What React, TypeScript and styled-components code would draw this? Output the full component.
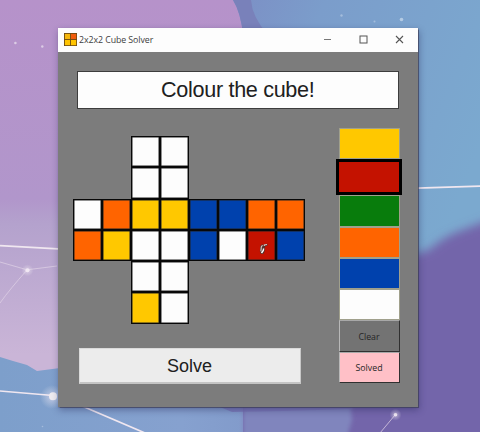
import React, { useState } from "react";
import styled, { createGlobalStyle } from "styled-components";

const GlobalStyle = createGlobalStyle`
  * { box-sizing: border-box; }
  body { margin: 0; overflow: hidden; }
`;

const COLORS = {
  yellow: "#ffc800",
  red: "#c41200",
  green: "#087c0c",
  orange: "#ff6400",
  blue: "#0041ad",
  white: "#fdfdfd",
};
type ColorName = keyof typeof COLORS;

const Desktop = styled.main`
  position: relative;
  isolation: isolate;
  width: 480px;
  height: 432px;
  padding: 28px 0 0 57.5px;
  overflow: hidden;
  background: #b397cc;
`;

const WallpaperArt = styled.svg`
  position: absolute;
  inset: 0;
  z-index: -1;
`;

const AppWindow = styled.section`
  display: flex;
  flex-direction: column;
  width: 360px;
  height: 379px;
  background: #7c7c7c;
  box-shadow: 0 0 1px 0.5px rgba(60, 60, 85, 0.7), 1px 3px 7px rgba(30, 30, 80, 0.4);
`;

const TitleBar = styled.header`
  display: flex;
  align-items: center;
  flex: 0 0 23.5px;
  padding-left: 6px;
  background: #fdfdfd;
`;

const Title = styled.h1`
  flex: 1;
  margin: 0 0 0 2.5px;
  color: #404040;
  font: 400 8.8px/12px "Open Sans", "Noto Sans", sans-serif;
  letter-spacing: -0.07px;
  white-space: nowrap;
`;

const WindowButton = styled.button`
  display: grid;
  place-items: center;
  width: 36px;
  height: 23px;
  padding: 0;
  border: 0;
  background: none;
`;

const Body = styled.div`
  display: grid;
  grid-template-columns: 243px 61px;
  grid-template-rows: 38.5px 1fr;
  column-gap: 18.5px;
  row-gap: 19px;
  flex: 1;
  padding: 19px 0 23px 19.5px;
`;

const Message = styled.output`
  display: grid;
  place-items: center;
  grid-column: 1 / -1;
  width: 321.5px;
  border: 1px solid #3d3d3d;
  background: #fdfdfd;
  color: #202020;
  font: 400 21.6px/26px "Liberation Sans", Arial, sans-serif;
  letter-spacing: -0.32px;
`;

const Workspace = styled.div`
  display: flex;
  flex-direction: column;
  align-items: flex-start;
  justify-content: space-between;
  padding-top: 8px;
`;

const Net = styled.div`
  display: grid;
  grid-template-columns: repeat(8, 29.05px);
  grid-template-rows: repeat(6, 31.25px);
  margin-left: -4px;
`;

const Sticker = styled.button<{ $row: number; $col: number; $color: ColorName }>`
  display: grid;
  place-items: center;
  grid-row: ${(p) => p.$row};
  grid-column: ${(p) => p.$col};
  padding: 0;
  border: 1px solid #080808;
  box-shadow: inset 0 0 0 0.5px #222;
  background: ${(p) => COLORS[p.$color]};
`;

const SolveButton = styled.button`
  width: 222px;
  height: 36px;
  margin-left: 1.5px;
  padding: 0;
  border: 1px solid #dadada;
  border-bottom: 2px solid #c4c4c4;
  border-right-color: #c8c8c8;
  background: #ececec;
  color: #202020;
  font: 400 18px/22px "Liberation Sans", Arial, sans-serif;
`;

const Palette = styled.div`
  display: flex;
  flex-direction: column;
`;

const Swatch = styled.button<{ $color: ColorName; $selected: boolean }>`
  flex: 0 0 ${(p) => (p.$selected ? 36 : 31.3)}px;
  margin: 0 ${(p) => (p.$selected ? -2.5 : 0)}px;
  padding: 0;
  border: ${(p) => (p.$selected ? "3px solid #000" : "1px solid #a0a08c")};
  background: ${(p) => COLORS[p.$color]};
`;

const PaletteButton = styled.button<{ $fill: string }>`
  flex: 0 0 31.3px;
  padding: 2px 0 0;
  border: 1px solid;
  border-color: #a8a8a8 #303030 #303030 #b8b8b8;
  background: ${(p) => p.$fill};
  color: #262626;
  font: 400 8.8px/12px "Open Sans", "Noto Sans", sans-serif;
`;

const Pointer = styled.svg`
  display: block;
  margin: 7px 0 0 5px;
`;

const NET: [number, number, ColorName][] = [
  [1, 3, "white"], [1, 4, "white"],
  [2, 3, "white"], [2, 4, "white"],
  [3, 1, "white"], [3, 2, "orange"], [3, 3, "yellow"], [3, 4, "yellow"],
  [3, 5, "blue"], [3, 6, "blue"], [3, 7, "orange"], [3, 8, "orange"],
  [4, 1, "orange"], [4, 2, "yellow"], [4, 3, "white"], [4, 4, "white"],
  [4, 5, "blue"], [4, 6, "white"], [4, 7, "red"], [4, 8, "blue"],
  [5, 3, "white"], [5, 4, "white"],
  [6, 3, "yellow"], [6, 4, "white"],
];

const Wallpaper = () => (
  <WallpaperArt width="480" height="432" viewBox="0 0 480 432" aria-hidden="true">
    <defs>
      <linearGradient id="lilac" x1="0" y1="0" x2="0" y2="1">
        <stop offset="0" stopColor="#b692ca" />
        <stop offset="0.46" stopColor="#b196cb" />
        <stop offset="0.52" stopColor="#b4a2cd" />
        <stop offset="0.82" stopColor="#cab5d7" />
      </linearGradient>
      <linearGradient id="sky" x1="0" y1="0" x2="1" y2="0.5">
        <stop offset="0" stopColor="#7c8fc5" />
        <stop offset="0.3" stopColor="#7b9dcb" />
        <stop offset="1" stopColor="#7ba9cf" />
      </linearGradient>
      <linearGradient id="shore" x1="0" y1="0" x2="1" y2="0">
        <stop offset="0" stopColor="#7d9fcb" />
        <stop offset="0.75" stopColor="#86a1cf" />
        <stop offset="1" stopColor="#829bcb" />
      </linearGradient>
      <radialGradient id="glow">
        <stop offset="0" stopColor="#fff" stopOpacity="0.9" />
        <stop offset="0.3" stopColor="#f4eaf6" stopOpacity="0.4" />
        <stop offset="1" stopColor="#eee" stopOpacity="0" />
      </radialGradient>
      <filter id="soft" x="-20%" y="-20%" width="140%" height="140%">
        <feGaussianBlur stdDeviation="5" />
      </filter>
      <filter id="haze" x="-20%" y="-20%" width="140%" height="140%">
        <feGaussianBlur stdDeviation="2" />
      </filter>
    </defs>
    <rect width="480" height="432" fill="url(#lilac)" />
    <path d="M233 0Q241 13 243 35L300 100V300H480V0Z" fill="url(#sky)" />
    <path d="M233 0H251Q252 17 268 35H243Q241 13 233 0Z" fill="#7981ba" />
    <path d="M405 258L430 249Q444 236 465 229L500 216V450H230V380H405Z" fill="#7365aa" filter="url(#soft)" />
    <path d="M0 357L13 361L27 365L37 371L60 368V400H243V432H0Z" fill="url(#shore)" />
    <path d="M243 400H350L352 420L346 440H243Z" fill="#8085bd" filter="url(#haze)" />
    <path d="M220 407H352V409L282 411L232 412Z" fill="#7872b4" opacity="0.7" />
    <g fill="none" stroke="#f0e7f0" strokeWidth="1.7">
      <path d="M0 245.7L58 248.8" />
      <path d="M417 188.2L480 186.2" />
      <path d="M0 391L53 395.5" />
      <path d="M82 406L145 433" />
    </g>
    <g fill="none" stroke="#ded0e5" strokeWidth="1" opacity="0.75">
      <path d="M0 262L27 269.8L57 266" />
      <path d="M0 303Q10 289 27 270" />
      <path d="M380 433L395 415" />
    </g>
    <circle cx="27.5" cy="270.3" r="6" fill="url(#glow)" />
    <circle cx="27.5" cy="270.3" r="2" fill="#f1e8f3" />
    <circle cx="52" cy="397" r="12" fill="url(#glow)" />
    <circle cx="53" cy="396.3" r="4" fill="#eeebef" />
    <circle cx="395.5" cy="414.7" r="6" fill="url(#glow)" />
    <circle cx="395.5" cy="414.7" r="1.8" fill="#f1e8f3" />
    <g fill="#dccce5">
      <circle cx="15.4" cy="43" r="1.3" />
      <circle cx="42.3" cy="46.5" r="1.2" />
      <circle cx="341.5" cy="15.5" r="1.2" fill="#a4bddc" />
      <circle cx="374.5" cy="21.5" r="1" fill="#a4bddc" />
      <circle cx="401.5" cy="19.5" r="1.8" fill="#b4cbe4" />
      <circle cx="42.5" cy="426.5" r="0.8" fill="#a5bbdc" />
    </g>
  </WallpaperArt>
);

const CubeIcon = () => (
  <svg width="13" height="13" viewBox="0 0 13 13" aria-hidden="true">
    <rect width="13" height="13" fill="#6d4a13" />
    <rect x="0.9" y="0.9" width="5.2" height="5.2" fill="#f5b70d" />
    <rect x="7" y="0.9" width="5.2" height="5.2" fill="#f25c0c" />
    <rect x="0.9" y="7" width="5.2" height="5.2" fill="#ffc400" />
    <rect x="7" y="7" width="5.2" height="5.2" fill="#ffc400" />
  </svg>
);

export default function App() {
  const [selected, setSelected] = useState<ColorName>("red");

  return (
    <>
      <GlobalStyle />
      <Desktop>
        <Wallpaper />
        <AppWindow>
          <TitleBar>
            <CubeIcon />
            <Title>2x2x2 Cube Solver</Title>
            <WindowButton aria-label="Minimize">
              <svg width="9" height="9" viewBox="0 0 9 9"><path d="M1 4.5H8" stroke="#777" /></svg>
            </WindowButton>
            <WindowButton aria-label="Maximize">
              <svg width="9" height="9" viewBox="0 0 9 9"><rect x="1" y="1" width="7" height="7" fill="none" stroke="#555" /></svg>
            </WindowButton>
            <WindowButton aria-label="Close">
              <svg width="9" height="9" viewBox="0 0 9 9"><path d="M1 1L8 8M8 1L1 8" stroke="#555" strokeWidth="1.1" /></svg>
            </WindowButton>
          </TitleBar>
          <Body>
            <Message>Colour the cube!</Message>
            <Workspace>
              <Net>
                {NET.map(([row, col, color]) => (
                  <Sticker key={`${row}-${col}`} $row={row} $col={col} $color={color}>
                    {color === "red" && (
                      <Pointer width="10" height="12" viewBox="0 0 10 12" aria-hidden="true">
                        <path d="M1.5 2.5L3.5 1.2L4.6 2.5L5.5 1.3L8.5 0.8V2.6L6 3.5L5.6 8.5L4.2 11H2L0.8 8.5Z" fill="#54322c" />
                        <path d="M1.9 8.4L2.3 4L3.5 2.3M5.3 3V1.9L8 1.5" fill="none" stroke="#d8cbc6" strokeWidth="1.1" />
                        <path d="M2.5 10L4.3 7.4L4.6 5.5" fill="none" stroke="#fff" strokeWidth="1.4" />
                      </Pointer>
                    )}
                  </Sticker>
                ))}
              </Net>
              <SolveButton>Solve</SolveButton>
            </Workspace>
            <Palette>
              {(Object.keys(COLORS) as ColorName[])
                .map((name) => (
                  <Swatch
                    key={name}
                    aria-label={name}
                    $color={name}
                    $selected={name === selected}
                    onClick={() => setSelected(name)}
                  />
                ))}
              <PaletteButton $fill="#737373">Clear</PaletteButton>
              <PaletteButton $fill="#ffc0c7">Solved</PaletteButton>
            </Palette>
          </Body>
        </AppWindow>
      </Desktop>
    </>
  );
}
